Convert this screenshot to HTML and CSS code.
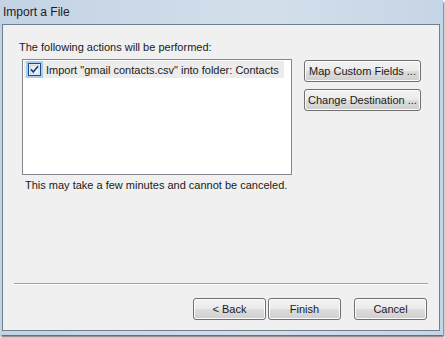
FILE: index.html
```html
<!DOCTYPE html>
<html>
<head>
<meta charset="utf-8">
<link rel="stylesheet" href="styles.css">
</head>
<body>
<div class="window">
  <div class="titlebar">Import a File</div>
  <div class="client">
    <div class="label">The following actions will be performed:</div>
    <div class="main-row">
      <div class="listbox">
        <div class="item">
          <span class="check-wrap">
            <svg class="check" width="13" height="13" viewBox="0 0 13 13">
              <defs>
                <linearGradient id="cb" x1="0" y1="0" x2="1" y2="1">
                  <stop offset="0" stop-color="#dfe6ee"/>
                  <stop offset="1" stop-color="#ffffff"/>
                </linearGradient>
              </defs>
              <rect x="0.5" y="0.5" width="12" height="12" fill="#fff" stroke="#1c4f86"/>
              <rect x="2" y="2" width="9" height="9" fill="url(#cb)" stroke="#9fb2c7" stroke-width="0.6"/>
              <path d="M3 6.4 L5.3 9 L10 3.2" fill="none" stroke="#1e3c86" stroke-width="1.7"/>
            </svg>
          </span>
          <span class="item-text">Import "gmail contacts.csv" into folder: Contacts</span>
        </div>
      </div>
      <div class="side-buttons">
        <button class="btn wide">Map Custom Fields ...</button>
        <button class="btn wide">Change Destination ...</button>
      </div>
    </div>
    <div class="note">This may take a few minutes and cannot be canceled.</div>
    <div class="spacer"></div>
    <div class="separator"></div>
    <div class="footer">
      <button class="btn">&lt; Back</button>
      <button class="btn">Finish</button>
      <button class="btn cancel">Cancel</button>
    </div>
  </div>
</div>
</body>
</html>
```
FILE: styles.css
```css
html, body {
  margin: 0;
  padding: 0;
  background: #ffffff;
}
body {
  width: 445px;
  height: 338px;
  overflow: hidden;
  font-family: "Liberation Sans", Arial, sans-serif;
  font-size: 11px;
  color: #1a1a1a;
}
.window {
  width: 443px;
  height: 335px;
  box-sizing: border-box;
  background: linear-gradient(to right, #c3d3e4, #d3dfeb 60%, #c6d5e5);
  display: flex;
  flex-direction: column;
  box-shadow: 1px 2px 2px rgba(60, 60, 60, 0.8);
}
.titlebar {
  height: 24px;
  line-height: 24px;
  padding-left: 3px;
  font-size: 12px;
  color: #1c1c1c;
  flex: none;
}
.client {
  flex: 1;
  margin: 0 3px 4px 2px;
  border: 1px solid #6e7f90;
  background: #f0f0f0;
  display: flex;
  flex-direction: column;
  padding-top: 15px;
}
.label {
  line-height: 15px;
  padding-left: 16px;
}
.main-row {
  display: flex;
  margin-top: 4px;
  padding-left: 19px;
}
.listbox {
  width: 270px;
  height: 116px;
  box-sizing: border-box;
  border: 1px solid #828790;
  background: #ffffff;
  padding: 1px;
}
.item {
  display: flex;
  align-items: center;
  height: 17px;
  width: 260px;
  background: #ececec;
}
.check-wrap {
  display: flex;
  align-items: center;
  justify-content: center;
  width: 17px;
  height: 17px;
  margin-left: 2px;
  background: #a9cbee;
}
.check {
  display: block;
}
.item-text {
  margin-left: 3px;
  white-space: nowrap;
}
.side-buttons {
  display: flex;
  flex-direction: column;
  gap: 7px;
  margin-left: 12px;
  padding-top: 1px;
}
.btn {
  font-family: inherit;
  font-size: 11px;
  color: #1a1a1a;
  width: 73px;
  height: 22px;
  padding: 0;
  border: 1px solid #707070;
  border-radius: 3px;
  background: linear-gradient(to bottom, #f2f2f2 0%, #ebebeb 50%, #dddddd 50%, #cfcfcf 100%);
  box-shadow: inset 0 0 0 1px #fcfcfc;
  white-space: nowrap;
}
.btn.wide {
  width: 117px;
}
.note {
  margin-top: 3px;
  padding-left: 22px;
  line-height: 15px;
}
.spacer {
  flex: 1;
}
.separator {
  margin: 0 11px;
  height: 1px;
  border-top: 1px solid #a0a0a0;
  background: #ffffff;
}
.footer {
  display: flex;
  justify-content: flex-end;
  padding-right: 12px;
  margin-top: 13px;
  margin-bottom: 10px;
  gap: 2px;
}
.btn.cancel {
  margin-left: 11px;
}
```
